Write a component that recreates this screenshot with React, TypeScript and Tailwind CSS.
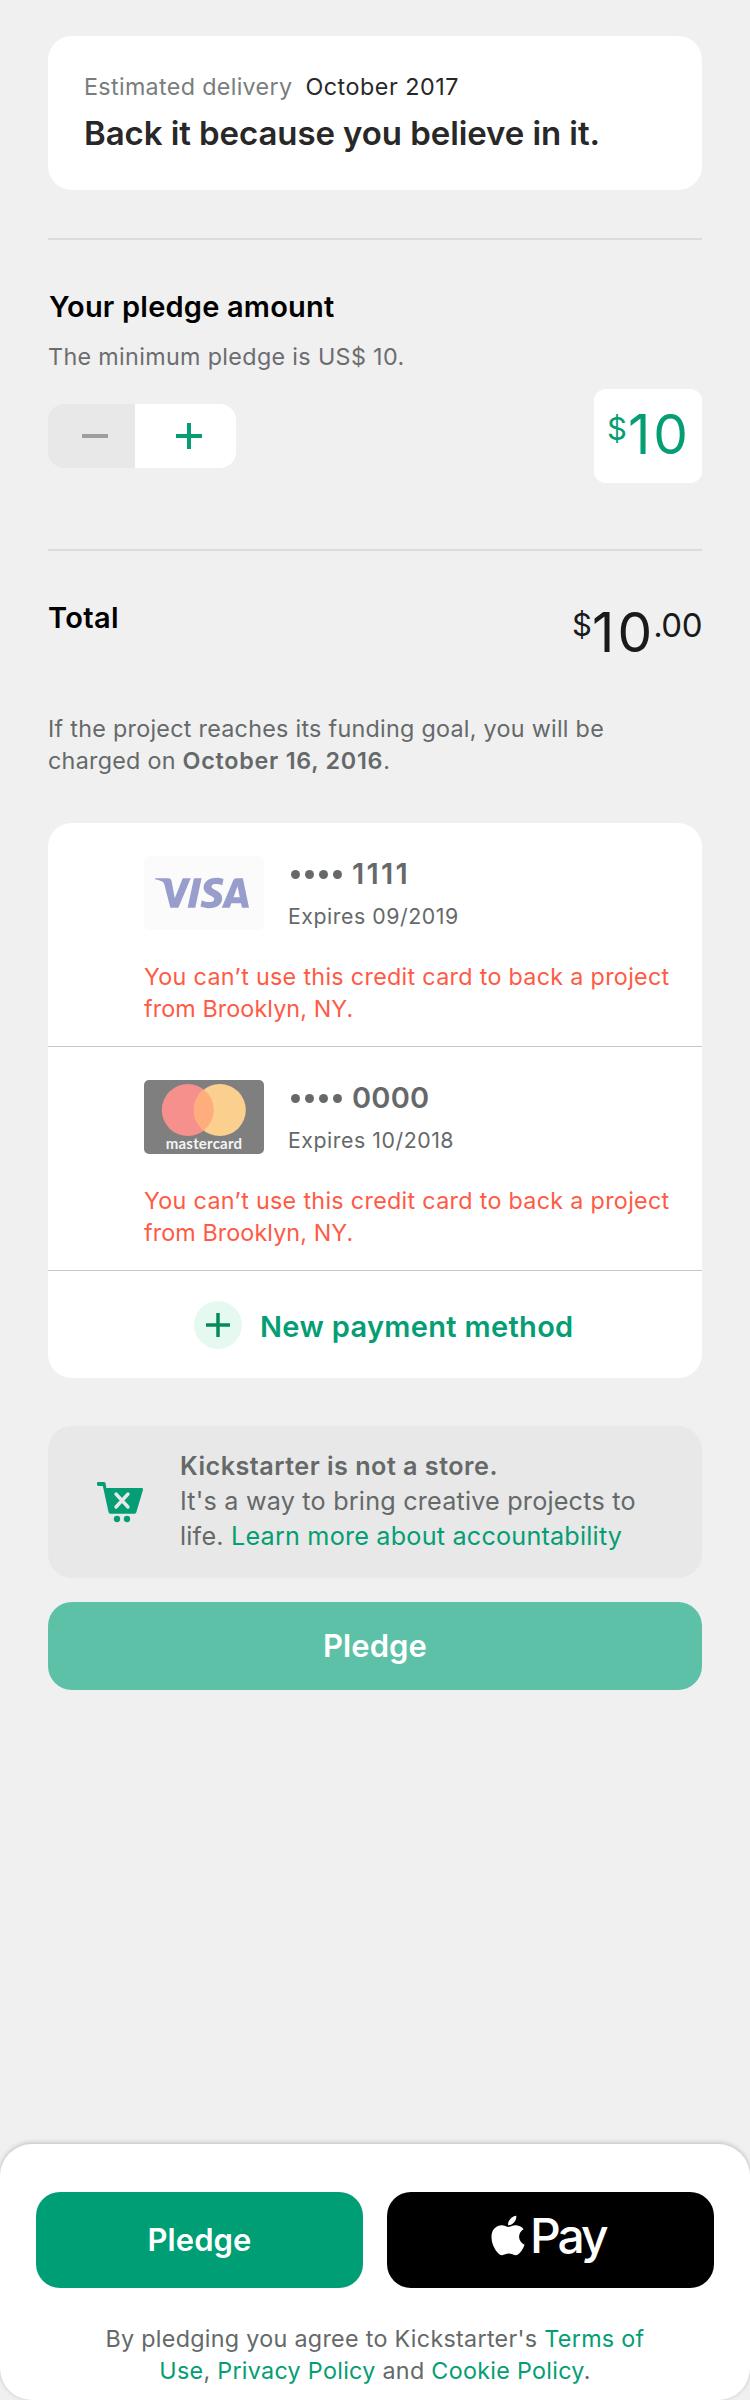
import React, { type ReactNode } from "react";
import { FaApple } from "react-icons/fa";
import { SiVisa } from "react-icons/si";

function Divider() {
  return <div className="h-[2px] shrink-0 bg-[#dcdcdc]" />;
}

function MastercardLogo() {
  return (
    <div className="flex h-full flex-col items-center">
      <svg className="mt-[4px] block h-[52px] w-[120px] shrink-0" viewBox="0 0 120 52">
        <circle cx="43.800" cy="26" r="26" fill="#f5908c" />
        <circle cx="75.800" cy="26" r="26" fill="#fbd08f" />
        <path d="M59.800 5.500 A26 26 0 0 1 59.800 46.500 A26 26 0 0 1 59.800 5.500 Z" fill="#ffad7d" />
      </svg>
      <span className="font-[Lato,sans-serif] text-[15px] leading-[14px] font-bold tracking-[0.2px] text-[#f4f4f4]">
        mastercard
      </span>
    </div>
  );
}

function PaymentCard({
  logo,
  digits,
  digitsClass,
  expires,
}: {
  logo: ReactNode;
  digits: string;
  digitsClass: string;
  expires: string;
}) {
  return (
    <div className="flex h-[224px] flex-col border-b border-[#c6c6c6] pt-[33px] pl-24">
      <div className="flex gap-[25px]">
        {logo}
        <div className="flex flex-col text-[#656969]">
          <div className="flex h-9 items-center gap-[10px] text-[29px] leading-9 font-semibold">
            <span className="flex gap-[5px] pt-px pl-[2px]">
              <i className="size-[9px] rounded-full bg-[#656969]" />
              <i className="size-[9px] rounded-full bg-[#656969]" />
              <i className="size-[9px] rounded-full bg-[#656969]" />
              <i className="size-[9px] rounded-full bg-[#656969]" />
            </span>
            <span className={digitsClass}>{digits}</span>
          </div>
          <div className="mt-[10px] -ml-px text-[21.3px] leading-7 tracking-[0.54px]">{expires}</div>
        </div>
      </div>
      <p className="mt-[31px] text-[23.3px] leading-8 tracking-[0.31px] text-[#ff5a44]">
        You can’t use this credit card to back a project
        <br />
        <span className="tracking-[0.1px]">from Brooklyn, NY.</span>
      </p>
    </div>
  );
}

function CartIcon() {
  return (
    <svg className="block h-[44px] w-[48px]" viewBox="48 60 144 132">
      <path
        d="M53.500 66H71.500Q76 66 76.700 70L79 84H185.500Q190.500 84 189 89L169 157Q168 161 164 161H90.500Q86.500 161 85.700 157L68.500 78H55Q51 78 51 73V69Q51 66 53.500 66Z"
        fill="#059e74"
      />
      <path d="M108 102L144 141M144 102L108 141" stroke="#e8e8e8" strokeWidth="10" strokeLinecap="round" />
      <circle cx="111" cy="177" r="9.500" fill="#059e74" />
      <circle cx="141" cy="177" r="9.500" fill="#059e74" />
    </svg>
  );
}

export default function App() {
  return (
    <main className="flex min-h-[2400px] w-[750px] flex-col bg-[#f0f0f0] font-[Inter,'Liberation_Sans',sans-serif]">
      <div className="flex flex-col px-12 pt-9">
        <section className="h-[154px] rounded-3xl bg-white pt-[35px] pl-9">
          <div className="flex gap-[13px] text-[23.3px] leading-8">
            <span className="tracking-[0.33px] text-[#7a7d7d]">Estimated delivery</span>
            <span className="tracking-[0.54px] text-[#282828]">October 2017</span>
          </div>
          <h1 className="mt-[10px] text-[33px] leading-10 font-semibold tracking-[-0.08px] text-[#282828]">
            Back it because you believe in it.
          </h1>
        </section>

        <div className="mt-12">
          <Divider />
        </div>

        <section className="mt-[49px]">
          <h2 className="pl-px text-[29px] leading-9 font-semibold tracking-[0.2px] text-black">
            Your pledge amount
          </h2>
          <p className="mt-4 text-[23.3px] leading-8 tracking-[0.35px] text-[#6d6d71]">The minimum pledge is US$ 10.</p>
          <div className="mt-4 flex h-[94px] items-center justify-between">
            <div className="flex h-16 w-[188px] overflow-hidden rounded-2xl">
              <button className="flex w-[87px] items-center bg-[#e8e8e8] pl-[34px]">
                <span className="h-1 w-[26px] bg-[#9e9e9e]" />
              </button>
              <button className="flex w-[101px] items-center bg-white pl-[41px]">
                <svg className="block size-[26px]" viewBox="0 0 26 26">
                  <path d="M13 0V26M0 13H26" stroke="#059e74" strokeWidth="4" />
                </svg>
              </button>
            </div>
            <div className="flex h-[94px] w-[108px] rounded-xl bg-white pl-[13px] text-[#059e74]">
              <span className="mt-[23px] w-[21px] text-[31px] leading-[34px]">$</span>
              <span className="mt-[13px] text-[55px] leading-[64px] tracking-[3px]">10</span>
            </div>
          </div>
        </section>

        <div className="mt-[66px]">
          <Divider />
        </div>

        <section className="mt-[49px] flex h-16 justify-between">
          <h2 className="text-[29px] leading-9 font-semibold tracking-[0.35px] text-black">Total</h2>
          <div className="flex text-[#1a1a1a]">
            <span className="mt-2 w-[20px] text-[31px] leading-[34px]">$</span>
            <span className="text-[55px] leading-[64px] tracking-[3px]">10</span>
            <span className="mt-2 -ml-[2px] text-[33px] leading-[34px] tracking-[-0.5px]">.00</span>
          </div>
        </section>

        <p className="mt-12 h-16 pt-px text-[23.3px] leading-8 tracking-[0.28px] text-[#656969]">
          If the project reaches its funding goal, you will be
          <br />
          charged on <b className="font-semibold tracking-[0.75px]">October 16, 2016</b>.
        </p>

        <section className="mt-[47px] h-[555px] overflow-hidden rounded-3xl bg-white">
          <PaymentCard
            logo={
              <div className="flex h-[74px] w-[120px] items-center justify-center rounded-[5px] bg-[#fbfbfb] pr-[5px]">
                <SiVisa size={94} color="#999dcb" />
              </div>
            }
            digits="1111"
            digitsClass="tracking-[2.2px]"
            expires="Expires 09/2019"
          />
          <PaymentCard
            logo={
              <div className="h-[74px] w-[120px] overflow-hidden rounded-[5px] bg-[#7f7f7f]">
                <MastercardLogo />
              </div>
            }
            digits="0000"
            digitsClass="tracking-[0.2px]"
            expires="Expires 10/2018"
          />
          <button className="flex items-center gap-[18px] pt-[30px] pl-[146px]">
            <span className="flex size-12 items-center justify-center rounded-full bg-[#e6f9f1]">
              <svg className="block size-6" viewBox="0 0 24 24">
                <path d="M12 0V24M0 12H24" stroke="#058a5e" strokeWidth="3.500" />
              </svg>
            </span>
            <span className="pt-1 text-[29px] leading-9 font-semibold tracking-[0.33px] text-[#059e74]">
              New payment method
            </span>
          </button>
        </section>

        <section className="mt-12 flex h-[152px] rounded-3xl bg-[#e8e8e8] pl-12">
          <div className="mt-[54px] w-[84px] shrink-0">
            <CartIcon />
          </div>
          <p className="pt-[23px] text-[25.2px] leading-[35px] tracking-[0.2px] text-[#656969]">
            <b className="font-semibold tracking-[0.48px]">Kickstarter is not a store.</b>
            <br />
            It's a way to bring creative projects to
            <br />
            life. <span className="text-[#059e74]">Learn more about accountability</span>
          </p>
        </section>

        <button className="mt-6 h-[88px] rounded-3xl bg-[#5dc1a8] text-[31px] font-semibold tracking-[0.1px] text-white">
          Pledge
        </button>
      </div>

      <footer className="mt-auto h-[256px] rounded-[32px] bg-white px-9 pt-12 shadow-[0_-1px_5px_rgba(0,0,0,0.22)]">
        <div className="flex gap-6">
          <button className="h-24 w-[327px] rounded-3xl bg-[#009e74] text-[31px] font-semibold tracking-[0.1px] text-white">
            Pledge
          </button>
          <button className="flex h-24 w-[327px] rounded-3xl bg-black pl-[104px] text-white">
            <FaApple className="mt-[21px] h-[45px] w-[34px] shrink-0" />
            <span className="mt-[12px] ml-[5px] text-[48px] leading-[64px] font-medium tracking-[-3px]">Pay</span>
          </button>
        </div>
        <p className="mt-[35px] text-center text-[23.3px] leading-8 tracking-[0.3px] text-[#656969]">
          By pledging you agree to Kickstarter's <span className="text-[#059e74]">Terms of</span>
          <br />
          <span className="text-[#059e74]">Use</span>, <span className="text-[#059e74]">Privacy Policy</span> and{" "}
          <span className="text-[#059e74]">Cookie Policy</span>.
        </p>
      </footer>
    </main>
  );
}
